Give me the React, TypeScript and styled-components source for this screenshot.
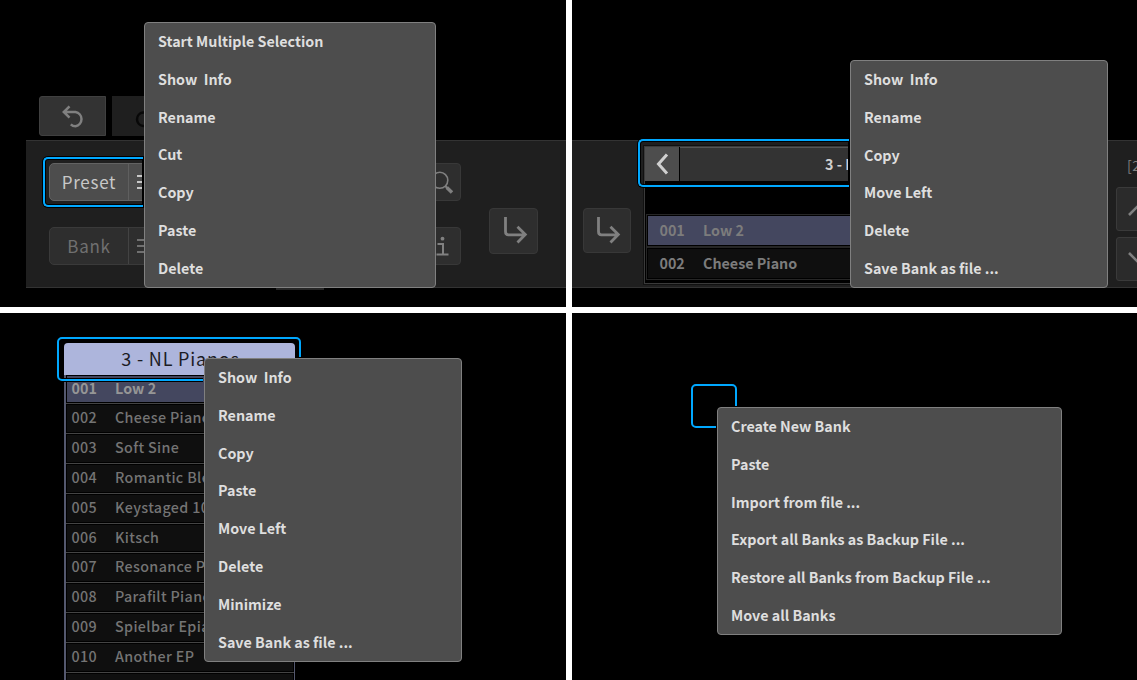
import React from "react";
import styled, { createGlobalStyle } from "styled-components";

const GlobalStyle = createGlobalStyle`
  *, *::before, *::after { box-sizing: border-box; }
  html, body { margin: 0; padding: 0; background: #fff; }
  body {
    font-family: "Noto Sans CJK SC", "Noto Sans", sans-serif;
    overflow: hidden;
    font-feature-settings: "liga" 1;
  }
`;

const Board = styled.main`
  display: grid;
  grid-template-columns: 566px 565px;
  grid-template-rows: 307px 367px;
  gap: 6px;
  width: 1137px;
  height: 680px;
  background: #fff;
`;

const Scene = styled.section`
  position: relative;
  display: flex;
  flex-direction: column;
  overflow: hidden;
  background: #000;
`;

/* Context menu and focus outline lie over the scene */
const Menu = styled.ul<{ $x: number; $y: number; $w: number; $h: number }>`
  position: absolute;
  left: ${(p) => p.$x}px;
  top: ${(p) => p.$y}px;
  width: ${(p) => p.$w}px;
  height: ${(p) => p.$h}px;
  margin: 0;
  padding: 0 13px;
  list-style: none;
  background: #4d4d4d;
  border: 1px solid #808080;
  border-radius: 4px;
`;

const MenuItem = styled.li`
  height: 37.83px;
  line-height: 35px;
  font-size: 14.3px;
  font-weight: 700;
  color: #dedede;
  white-space: pre;
`;

const FocusRing = styled.div<{ $x: number; $y: number; $w: number; $h: number; $open?: boolean; $clip?: string }>`
  position: absolute;
  left: ${(p) => p.$x}px;
  top: ${(p) => p.$y}px;
  width: ${(p) => p.$w}px;
  height: ${(p) => p.$h}px;
  border: 2px solid #00a8ff;
  border-radius: ${(p) => (p.$open ? "5px 0 0 5px" : "5px")};
  ${(p) => p.$open && "border-right: 0;"}
  box-shadow: 0 0 0 1px #000, inset 0 0 0 1px #000;
  ${(p) => p.$clip && `clip-path: ${p.$clip};`}
`;

const Tabs = styled.div`
  display: flex;
  gap: 6px;
  margin: 96px 0 4px 39px;
`;

const Tab = styled.div<{ $off?: boolean }>`
  display: flex;
  align-items: center;
  justify-content: center;
  width: 67px;
  height: 40px;
  background: ${(p) => (p.$off ? "#1f1f1f" : "#333")};
  border: 1px solid ${(p) => (p.$off ? "#1f1f1f" : "#404040")};
  border-radius: ${(p) => (p.$off ? "0" : "3px 0 0 3px")};
`;

const Dock = styled.div<{ $left?: number; $top?: number }>`
  display: flex;
  height: 148px;
  margin-left: ${(p) => p.$left ?? 0}px;
  margin-top: ${(p) => p.$top ?? 0}px;
  background: #1f1f1f;
  border-top: 1px solid #333;
  border-bottom: 1px solid #333;
`;

const DockTail = styled.div`
  width: 48px;
  height: 2px;
  margin-left: 250px;
  background: #262626;
  transform: translateX(26px);
`;

const Controls = styled.div`
  display: flex;
  flex-direction: column;
  gap: 26px;
  width: 412px;
  margin: 22px 28px 0 23px;
`;

const ControlRow = styled.div`
  display: flex;
  justify-content: space-between;
  height: 38px;
`;

const SplitButton = styled.div<{ $active?: boolean }>`
  display: flex;
  width: 112px;
  height: 38px;
  background: ${(p) => (p.$active ? "#4d4d4d" : "#2e2e2e")};
  border: 1px solid ${(p) => (p.$active ? "#636363" : "#3a3a3a")};
  border-radius: 5px;
  color: ${(p) => (p.$active ? "#c8c8c8" : "#707070")};
`;

const SplitLabel = styled.div`
  width: 79px;
  border-right: 1px solid rgba(255, 255, 255, 0.1);
  line-height: 36px;
  text-align: center;
  font-size: 17px;
  letter-spacing: 0.7px;
`;

const Burger = styled.div`
  display: flex;
  flex-direction: column;
  justify-content: center;
  gap: 4px;
  padding-left: 8px;
  &::before, &::after, span { content: ""; display: block; width: 17px; height: 2px; background: currentColor; }
`;

const IconButton = styled.div<{ $w: number; $h: number; $top?: number; $left?: number }>`
  display: flex;
  flex: none;
  align-items: center;
  justify-content: center;
  width: ${(p) => p.$w}px;
  height: ${(p) => p.$h}px;
  margin-top: ${(p) => p.$top ?? 0}px;
  margin-left: ${(p) => p.$left ?? 0}px;
  background: #2e2e2e;
  border: 1px solid #383838;
  border-radius: 4px;
`;

const Browser = styled.div`
  flex: none;
  width: 460px;
  height: 138px;
  margin: 5px 12px 0 13px;
  background: #000;
  border: 1px solid #3a3a3a;
  box-shadow: 0 0 0 1px #111;
`;

const BrowserHead = styled.div`
  display: flex;
  gap: 1px;
  height: 34px;
  margin-bottom: 33px;
`;

const BackButton = styled.div`
  display: flex;
  align-items: center;
  justify-content: center;
  width: 34px;
  background: #4d4d4d;
`;

const BankTitle = styled.div`
  flex: 1;
  padding-left: 145px;
  background: #333;
  border-top: 1px solid #555;
  line-height: 31px;
  font-size: 14.3px;
  font-weight: 700;
  color: #d0d0d0;
`;

const BrowserRow = styled.div<{ $selected?: boolean }>`
  display: flex;
  height: 33px;
  margin: 0 1px;
  padding-left: 12.5px;
  background: ${(p) => (p.$selected ? "#44475f" : "#0f0f0f")};
  border: 1px solid #262626;
  box-shadow: inset 0 0 0 1px #000;
  line-height: 29px;
  font-size: 14.3px;
  font-weight: 700;
  color: #7c7c7c;
`;

const Num = styled.span`
  flex: none;
  width: 43.5px;
`;

const Pager = styled.div`
  display: flex;
  flex: none;
  flex-direction: column;
`;

const Count = styled.div`
  height: 46px;
  padding-left: 11px;
  line-height: 48px;
  font-size: 14px;
  letter-spacing: 0.5px;
  color: #808080;
`;

const PageButton = styled.div`
  display: flex;
  align-items: center;
  width: 48px;
  height: 44px;
  margin-bottom: 6px;
  padding-left: 11px;
  background: #2b2b2b;
  border: 1px solid #3a3a3a;
  border-radius: 3px;
`;

const Bank = styled.div`
  width: 231px;
  margin: 30px 0 0 64px;
`;

const BankHead = styled.div`
  height: 31.7px;
  padding-left: 2px;
  background: #adb5dc;
  border-radius: 4px 4px 0 0;
  line-height: 31px;
  text-align: center;
  font-size: 18px;
  letter-spacing: 0.8px;
  color: #1c1c24;
`;

const BankRows = styled.div`
  border: solid #54586e;
  border-width: 0 1px 0 2px;
`;

const BankRow = styled.div<{ $selected?: boolean }>`
  display: flex;
  height: 29.8px;
  padding-left: 5.5px;
  background: ${(p) => (p.$selected ? "#44475f" : "#0f0f0f")};
  border-bottom: 1px solid #444;
  box-shadow: inset 0 0 0 1px #000;
  line-height: 26px;
  font-size: 14.3px;
  font-weight: ${(p) => (p.$selected ? 700 : 500)};
  letter-spacing: ${(p) => (p.$selected ? 0.1 : 0.35)}px;
  color: ${(p) => (p.$selected ? "#969696" : "#747474")};
  white-space: nowrap;
`;

const Icon = ({ w, h, d, color, sw = 2.5 }: { w: number; h: number; d: string; color: string; sw?: number }) => (
  <svg width={w} height={h} viewBox={`0 0 ${w} ${h}`} fill="none" stroke={color} strokeWidth={sw}>
    <path d={d} />
  </svg>
);

const UNDO = "M8.5 2.3L2.8 8L8.5 13.7M3 8H14.5A7.2 7.2 0 0 1 14.5 22.2Q11.8 22.2 9.8 20.3";
const ENTER = "M5.5 0V14.5Q5.5 17.8 8.5 17.8H25M17.5 9.8L25.3 17.6L17.5 25.4";

type MenuProps = { x: number; y: number; w: number; h: number; items: string[] };
const ContextMenu = ({ x, y, w, h, items }: MenuProps) => (
  <Menu $x={x} $y={y} $w={w} $h={h}>
    {items.map((item) => (
      <MenuItem key={item}>{item}</MenuItem>
    ))}
  </Menu>
);

const presets = [
  "Low 2",
  "Cheese Piano",
  "Soft Sine",
  "Romantic Bleu",
  "Keystaged 10",
  "Kitsch",
  "Resonance Pad",
  "Parafilt Piano",
  "Spielbar Epiano",
  "Another EP",
];

export default function App() {
  return (
    <>
      <GlobalStyle />
      <Board>
        <Scene>
          <Tabs>
            <Tab>
              <Icon w={24} h={24} d={UNDO} color="#808080" />
            </Tab>
            <Tab $off>
              <Icon w={24} h={24} d="M14 8.5H9A6.8 6.8 0 0 0 9 22H13" color="#080808" />
            </Tab>
          </Tabs>
          <Dock $left={26}>
            <Controls>
              <ControlRow>
                <SplitButton $active>
                  <SplitLabel>Preset</SplitLabel>
                  <Burger>
                    <span />
                  </Burger>
                </SplitButton>
                <IconButton $w={38} $h={38}>
                  <svg width="24" height="24" viewBox="0 0 24 24" fill="none" stroke="#808080">
                    <circle cx="9.8" cy="10.3" r="8" strokeWidth="1.6" />
                    <path d="M15.3 16L17.3 18" strokeWidth="2" />
                    <path d="M16.8 17.5L22 22.5" strokeWidth="3.5" />
                  </svg>
                </IconButton>
              </ControlRow>
              <ControlRow>
                <SplitButton>
                  <SplitLabel>Bank</SplitLabel>
                  <Burger>
                    <span />
                  </Burger>
                </SplitButton>
                <IconButton $w={38} $h={38}>
                  <svg width="14" height="20" viewBox="0 0 14 20" fill="none" stroke="#808080" strokeWidth="2">
                    <circle cx="7.5" cy="2.7" r="1.9" fill="#808080" stroke="none" />
                    <path d="M2.5 8H8V18.5M1.5 18.5H13.5" />
                  </svg>
                </IconButton>
              </ControlRow>
            </Controls>
            <IconButton $w={49} $h={46} $top={67}>
              <Icon w={28} h={28} d={ENTER} color="#808080" sw={2.8} />
            </IconButton>
          </Dock>
          <DockTail />
          <FocusRing $x={43} $y={157} $w={100} $h={50} $open />
          <ContextMenu
            x={144}
            y={22}
            w={292}
            h={266}
            items={["Start Multiple Selection", "Show  Info", "Rename", "Cut", "Copy", "Paste", "Delete"]}
          />
        </Scene>

        <Scene>
          <Dock $top={140}>
            <IconButton $w={48} $h={45} $top={67} $left={11}>
              <Icon w={28} h={28} d={ENTER} color="#808080" sw={2.8} />
            </IconButton>
            <Browser>
              <BrowserHead>
                <BackButton>
                  <Icon w={14} h={22} d="M12 1.5L3.5 11L12 20.5" color="#d0d0d0" sw={3} />
                </BackButton>
                <BankTitle>3 - NL Pianos</BankTitle>
              </BrowserHead>
              <BrowserRow $selected>
                <Num>001</Num>Low 2
              </BrowserRow>
              <BrowserRow>
                <Num>002</Num>Cheese Piano
              </BrowserRow>
            </Browser>
            <Pager>
              <Count>[22]</Count>
              <PageButton>
                <Icon w={26} h={16} d="M1 14L13 2L25 14" color="#808080" sw={2.6} />
              </PageButton>
              <PageButton>
                <Icon w={26} h={16} d="M1 2L13 14L25 2" color="#808080" sw={2.6} />
              </PageButton>
            </Pager>
          </Dock>
          <FocusRing $x={66} $y={139} $w={211} $h={48} $open />
          <ContextMenu
            x={278}
            y={60}
            w={258}
            h={228}
            items={["Show  Info", "Rename", "Copy", "Move Left", "Delete", "Save Bank as file ..."]}
          />
        </Scene>

        <Scene>
          <Bank>
            <BankHead>3 - NL Pianos</BankHead>
            <BankRows>
              {presets.map((name, i) => (
                <BankRow key={i} $selected={i === 0}>
                  <Num>{String(i + 1).padStart(3, "0")}</Num>
                  {name}
                </BankRow>
              ))}
              <BankRow />
            </BankRows>
          </Bank>
          <FocusRing
            $x={57}
            $y={24}
            $w={244}
            $h={44}
            $clip="polygon(-1px -1px, 245px -1px, 245px 20px, 146px 20px, 146px 45px, -1px 45px)"
          />
          <ContextMenu
            x={204}
            y={45}
            w={258}
            h={303.6}
            items={["Show  Info", "Rename", "Copy", "Paste", "Move Left", "Delete", "Minimize", "Save Bank as file ..."]}
          />
        </Scene>

        <Scene>
          <FocusRing
            $x={119}
            $y={71}
            $w={46}
            $h={44}
            $clip="polygon(-1px -1px, 47px -1px, 47px 22px, 25px 22px, 25px 45px, -1px 45px)"
          />
          <ContextMenu
            x={145}
            y={94}
            w={345}
            h={228}
            items={[
              "Create New Bank",
              "Paste",
              "Import from file ...",
              "Export all Banks as Backup File ...",
              "Restore all Banks from Backup File ...",
              "Move all Banks",
            ]}
          />
        </Scene>
      </Board>
    </>
  );
}
